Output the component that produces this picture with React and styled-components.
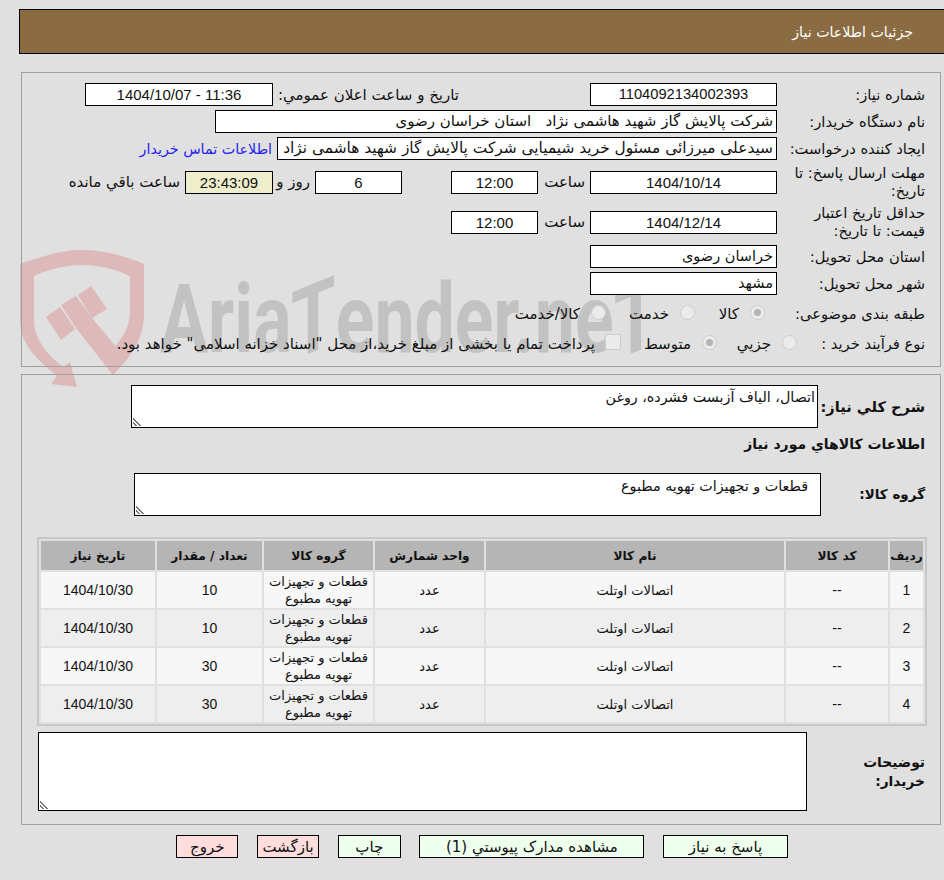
import React from 'react'
import styled, { createGlobalStyle } from 'styled-components'

const GlobalStyle = createGlobalStyle`
  html, body { margin: 0; padding: 0; background: #e0e0e0; }
  body { font-family: "DejaVu Sans", sans-serif; font-size: 15px; color: #111; }
`

const Page = styled.div`
  position: relative;
  direction: rtl;
  width: 944px;
  height: 880px;
  overflow: hidden;
`

const Header = styled.div`
  height: 43px;
  margin: 9px 0 0 19px;
  border: 1px solid #000;
  border-right: 0;
  background: #8b6c42;
  color: #fff;
  font-size: 14.2px;
  line-height: 44px;
  padding-right: 31px;
`

const Mark = styled.svg`
  position: absolute;
  left: 10px;
  top: 240px;
`

const WaterText = styled.div`
  position: absolute;
  left: 160px;
  top: 269px;
  direction: ltr;
  font-family: Roboto, sans-serif;
  font-weight: 700;
  font-size: 96px;
  line-height: 100px;
  color: #c2c2c2;
  white-space: nowrap;
  transform: scaleX(.745);
  transform-origin: left top;
`

const WaterCap = styled.span`
  display: inline-block;
  transform: skewY(-17deg);
  transform-origin: center center;
`

const Panel = styled.div`
  position: relative;
  margin: ${p => p.$top}px 3px 0 21px;
  border: 1px solid #a0a0a0;
  height: ${p => p.$h}px;
  padding: ${p => p.$pt}px 15px 0 0;
  box-sizing: border-box;
`

const Row = styled.div`
  display: flex;
  align-items: center;
  height: ${p => p.$h || 27}px;
  margin-top: ${p => p.$mt || 0}px;
`

const Label = styled.div`
  width: ${p => p.$w || 148}px;
  flex: none;
  font-size: 14.7px;
  line-height: 18px;
  white-space: nowrap;
`

const Field = styled.div`
  flex: none;
  width: ${p => p.$w}px;
  height: 23px;
  box-sizing: border-box;
  border: 1px solid #000;
  background: ${p => p.$bg || '#fff'};
  line-height: 21px;
  margin-right: ${p => p.$mr || 0}px;
  padding: 0 3px;
  text-align: ${p => p.$num ? 'center' : 'right'};
  direction: ${p => p.$num ? 'ltr' : 'rtl'};
  font-family: ${p => p.$num ? '"Liberation Sans", sans-serif' : 'inherit'};
  font-size: ${p => p.$size || 15}px;
  white-space: nowrap;
  overflow: hidden;
`

const Note = styled.span`
  flex: none;
  width: ${p => p.$w ? p.$w + 'px' : 'auto'};
  margin-right: ${p => p.$mr || 5}px;
  white-space: nowrap;
`

const BuyerLink = styled.a`
  margin-right: 5px;
  color: #2222ee;
  font-size: 14.3px;
  white-space: nowrap;
`

const Option = styled.span`
  display: inline-flex;
  align-items: center;
  width: ${p => p.$w ? p.$w + 'px' : 'auto'};
  flex: none;
  gap: 11px;
  white-space: nowrap;
`

const Radio = styled.span`
  position: relative;
  flex: none;
  top: -2px;
  width: 15px;
  height: 15px;
  box-sizing: border-box;
  border-radius: 50%;
  border: 1px solid #cccccc;
  background: #ebebeb;
  &::after {
    content: "";
    display: ${p => p.$on ? 'block' : 'none'};
    position: absolute;
    inset: 3px;
    border-radius: 50%;
    background: #b4b4b4;
  }
`

const Check = styled.span`
  flex: none;
  position: relative;
  top: -2px;
  width: 16px;
  height: 16px;
  box-sizing: border-box;
  border: 1px solid #cccccc;
  border-radius: 2px;
  background: #ebebeb;
`

const Area = styled.div`
  position: relative;
  flex: none;
  box-sizing: border-box;
  width: ${p => p.$w}px;
  height: ${p => p.$h}px;
  border: 1px solid #000;
  background: #fff;
  font-size: 14.3px;
  padding: ${p => p.$pad || '3px 2px'};
  &::after {
    content: "";
    position: absolute;
    left: 1px;
    bottom: 1px;
    width: 9px;
    height: 9px;
    background: repeating-linear-gradient(45deg, transparent 0 1.5px, #777 1.5px 3px);
    clip-path: polygon(0 0, 100% 100%, 0 100%);
  }
`

const BoldLabel = styled.div`
  flex: none;
  width: ${p => p.$w}px;
  font-size: ${p => p.$size}px;
  font-weight: 700;
  line-height: 19px;
  white-space: nowrap;
`

const Heading = styled.div`
  font-size: 14px;
  font-weight: 700;
  height: 19px;
  line-height: 19px;
  margin-top: 7px;
`

const Table = styled.table`
  width: 888px;
  height: 189px;
  margin: 21px -2px 0 0;
  border: 2px solid #c8c8c8;
  border-spacing: 2px;
  border-collapse: separate;
  background: #e0e0e0;
  table-layout: fixed;
  box-sizing: border-box;
  font-size: 13px;
`

const Th = styled.th`
  background: #b5b5b5;
  height: 29px;
  padding: 0;
  font-size: 12.2px;
  font-weight: 700;
  text-align: center;
  white-space: nowrap;
`

const Td = styled.td`
  background: ${p => p.$even ? '#eeeeee' : '#f7f7f7'};
  padding: 0;
  text-align: center;
  line-height: 17px;
  font-family: ${p => p.$num ? '"Liberation Sans", sans-serif' : 'inherit'};
  font-size: ${p => p.$num ? '14px' : 'inherit'};
`

const Bar = styled.div`
  display: flex;
  gap: 18.6px;
  margin: 10px 156px 0 0;
`

const Button = styled.button`
  width: ${p => p.$w}px;
  height: 23px;
  box-sizing: border-box;
  border: 1px solid #000;
  background: ${p => p.$red ? '#ffdddd' : '#eeffee'};
  font: inherit;
  color: #111;
  padding: 0;
  flex: none;
`

const cols = [33, 102, 298, 109, 109, 105, 114]
const heads = ['رديف', 'کد کالا', 'نام کالا', 'واحد شمارش', 'گروه کالا', 'تعداد / مقدار', 'تاریخ نیاز']
const items = [
  [1, 10],
  [2, 10],
  [3, 30],
  [4, 30],
]

export default function App() {
  return (
    <Page>
      <GlobalStyle />
      <Mark width="160" height="150" viewBox="0 0 160 150">
        <path
          fill="#ddb9b9"
          d="M10 24 C38 14 55 10 72 10 C90 10 110 14 134 24 L134 73 C134 100 120 118 103 135 L92 120 C108 105 120 90 120 72 L120 36 C105 29 90 25 72 25 C55 25 40 29 24 36 L24 80 C24 100 38 115 53 127 L60 122 L67 147 L41 144 L47 136 C28 120 10 105 10 80 Z"
        />
        <path
          fill="#ddb9b9"
          d="M36 77 L50 67 L65 89 L51 100 Z M51 65 L66 56 L82 78 L66 88 Z M68 55 L81 46 L97 69 L82 78 Z M66 88 L82 78 L113 115 L103 135 Z"
        />
      </Mark>
      <WaterText>Aria<WaterCap>T</WaterCap>ender.ne<WaterCap>T</WaterCap></WaterText>

      <Header>جزئیات اطلاعات نیاز</Header>

      <Panel $top={18} $h={295} $pt={8}>
        <Row>
          <Label>شماره نیاز:</Label>
          <Field $w={187} $num $size={14.7}>1104092134002393</Field>
          <Note $w={181} $mr={131}>تاریخ و ساعت اعلان عمومي:</Note>
          <Field $w={188} $mr={5} $num>1404/10/07 - 11:36</Field>
        </Row>
        <Row>
          <Label>نام دستگاه خریدار:</Label>
          <Field $w={562}>شرکت پالایش گاز شهید هاشمی نژاد &nbsp; استان خراسان رضوی</Field>
        </Row>
        <Row>
          <Label>ایجاد کننده درخواست:</Label>
          <Field $w={500} $size={15.4}>سیدعلی میرزائی مسئول خرید شیمیایی شرکت پالایش گاز شهید هاشمی نژاد</Field>
          <BuyerLink>اطلاعات تماس خریدار</BuyerLink>
        </Row>
        <Row $h={40}>
          <Label>مهلت ارسال پاسخ: تا<br />تاریخ:</Label>
          <Field $w={187} $num>1404/10/14</Field>
          <Note $w={47}>ساعت</Note>
          <Field $w={87} $num>12:00</Field>
          <Field $w={87} $mr={49} $num>6</Field>
          <Note $w={37}>روز و</Note>
          <Field $w={88} $num $bg="#eeeecc">23:43:09</Field>
          <Note>ساعت باقي مانده</Note>
        </Row>
        <Row $h={40}>
          <Label>حداقل تاریخ اعتبار<br />قیمت: تا تاریخ:</Label>
          <Field $w={187} $num>1404/12/14</Field>
          <Note $w={47}>ساعت</Note>
          <Field $w={87} $num>12:00</Field>
        </Row>
        <Row $h={29}>
          <Label>استان محل تحویل:</Label>
          <Field $w={187} $size={14.5}>خراسان رضوی</Field>
        </Row>
        <Row $h={25}>
          <Label>شهر محل تحویل:</Label>
          <Field $w={187} $size={14.5}>مشهد</Field>
        </Row>
        <Row $h={36}>
          <Label $w={160}>طبقه بندی موضوعی:</Label>
          <Option $w={70}><Radio $on />کالا</Option>
          <Option $w={89}><Radio />خدمت</Option>
          <Option><Radio />کالا/خدمت</Option>
        </Row>
        <Row $h={24}>
          <Label $w={128}>نوع فرآیند خرید :</Label>
          <Option $w={80}><Radio />جزيي</Option>
          <Option $w={96}><Radio $on />متوسط</Option>
          <Check />
          <Note $mr={10}>پرداخت تمام یا بخشی از مبلغ خرید،از محل "اسناد خزانه اسلامی" خواهد بود.</Note>
        </Row>
      </Panel>

      <Panel $top={7} $h={451} $pt={10}>
        <Row $h={43}>
          <BoldLabel $w={107} $size={14.6}>شرح کلي نیاز:</BoldLabel>
          <Area $w={687} $h={43}>اتصال، الیاف آزبست فشرده، روغن</Area>
        </Row>
        <Heading>اطلاعات کالاهاي مورد نیاز</Heading>
        <Row $h={43} $mt={19}>
          <BoldLabel $w={104} $size={13.5}>گروه کالا:</BoldLabel>
          <Area $w={687} $h={43} $pad="4px 12px">قطعات و تجهیزات تهویه مطبوع</Area>
        </Row>
        <Table>
          <colgroup>
            {cols.map((w, i) => <col key={i} style={{ width: w }} />)}
          </colgroup>
          <thead>
            <tr>{heads.map(h => <Th key={h}>{h}</Th>)}</tr>
          </thead>
          <tbody>
            {items.map(([n, qty], i) => (
              <tr key={n}>
                <Td $even={i % 2} $num>{n}</Td>
                <Td $even={i % 2} $num>--</Td>
                <Td $even={i % 2}>اتصالات اوتلت</Td>
                <Td $even={i % 2}>عدد</Td>
                <Td $even={i % 2}>قطعات و تجهیزات<br />تهویه مطبوع</Td>
                <Td $even={i % 2} $num>{qty}</Td>
                <Td $even={i % 2} $num>1404/10/30</Td>
              </tr>
            ))}
          </tbody>
        </Table>
        <Row $h={79} $mt={6}>
          <BoldLabel $w={118} $size={13.8}>توضیحات<br />خریدار:</BoldLabel>
          <Area $w={769} $h={79} />
        </Row>
      </Panel>

      <Bar>
        <Button $w={125}>پاسخ به نیاز</Button>
        <Button $w={225}>مشاهده مدارک پیوستي (1)</Button>
        <Button $w={63}>چاپ</Button>
        <Button $w={62.4} $red>بازگشت</Button>
        <Button $w={62} $red>خروج</Button>
      </Bar>
    </Page>
  )
}
